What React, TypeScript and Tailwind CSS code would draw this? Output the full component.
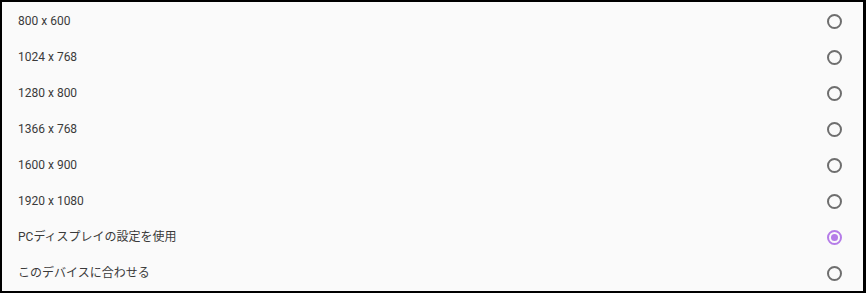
import { useState } from 'react'

const options = [
  '800 x 600',
  '1024 x 768',
  '1280 x 800',
  '1366 x 768',
  '1600 x 900',
  '1920 x 1080',
  'PCディスプレイの設定を使用',
  'このデバイスに合わせる',
]

export default function App() {
  const [selected, setSelected] = useState(6)

  return (
    <div
      className="w-[866px] h-[293px] border-2 border-r-[3px] border-black bg-[#fafafa] flex flex-col pt-px"
      style={{ fontFamily: 'Roboto, "Noto Sans CJK JP", sans-serif' }}
    >
      {options.map((label, i) => (
        <label
          key={label}
          className="flex-1 flex items-center justify-between pl-4 pr-[21px] cursor-pointer"
          onClick={() => setSelected(i)}
        >
          <span className="text-[12px] text-[#3a3a3a]">{label}</span>
          {selected === i ? (
            <span className="w-[15px] h-[15px] rounded-full border-2 border-[#b57ce8] flex items-center justify-center">
              <span className="w-[7px] h-[7px] rounded-full bg-[#b57ce8]" />
            </span>
          ) : (
            <span className="w-[15px] h-[15px] rounded-full border-2 border-[#6e6e6e]" />
          )}
        </label>
      ))}
    </div>
  )
}
